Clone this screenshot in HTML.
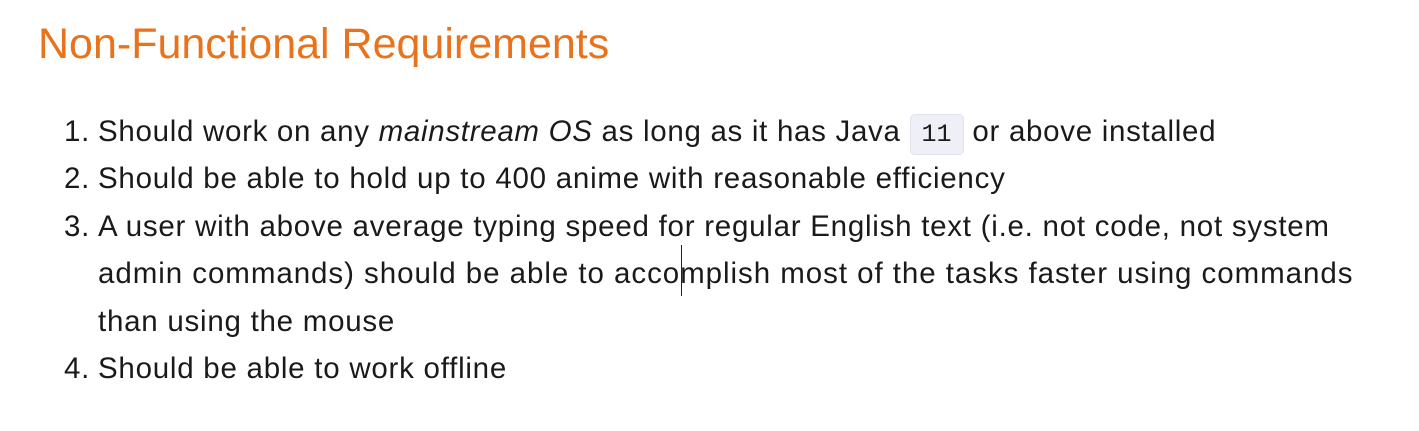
<!DOCTYPE html>
<html><head><meta charset="utf-8"><style>
html,body{margin:0;padding:0;background:#fff;width:1419px;height:431px;overflow:hidden}
body{font-family:"Liberation Sans",sans-serif;color:#1a1a1a;position:relative}
h2{position:absolute;left:38px;top:20px;margin:0;font-weight:normal;font-size:43px;color:#e8731c;white-space:nowrap;letter-spacing:0}
.l{position:absolute;white-space:nowrap;font-size:29.5px;letter-spacing:0.75px;line-height:48px}
.n{position:absolute;left:64px}
.t{position:absolute;left:98px}
code{font-family:"Liberation Mono",monospace;font-size:25px;background:#efeff8;border:1px solid #e2e2ec;border-radius:5px;padding:5px 11px;letter-spacing:0}
.cur{position:absolute;left:681px;top:245px;width:1px;height:51px;background:#222}
</style></head><body>
<h2>Non-Functional Requirements</h2>
<div class="l" style="top:108px;letter-spacing:0.7px"><span class="n">1.</span><span class="t">Should work on any <i>mainstream OS</i> as long as it has Java <code>11</code> or above installed</span></div>
<div class="l" style="top:155px"><span class="n">2.</span><span class="t">Should be able to hold up to 400 anime with reasonable efficiency</span></div>
<div class="l" style="top:203px"><span class="n">3.</span><span class="t">A user with above average typing speed for regular English text (i.e. not code, not system</span></div>
<div class="l" style="top:250px;letter-spacing:0.95px"><span class="t">admin commands) should be able to accomplish most of the tasks faster using commands</span></div>
<div class="l" style="top:298px"><span class="t">than using the mouse</span></div>
<div class="l" style="top:345px"><span class="n">4.</span><span class="t">Should be able to work offline</span></div>
<div class="cur"></div>
</body></html>
